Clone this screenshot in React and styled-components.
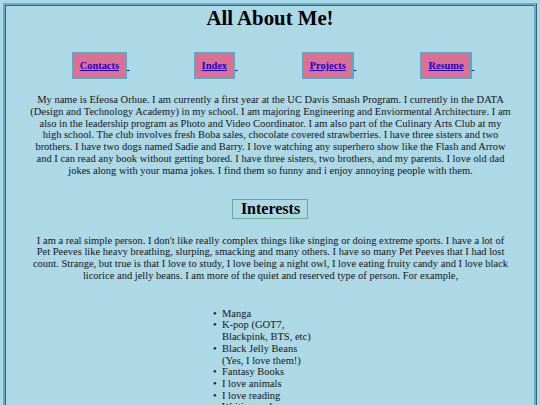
import React from "react";
import styled, { createGlobalStyle } from "styled-components";

const GlobalStyle = createGlobalStyle`
  html {
    background-color: #add8e6;
  }
  body {
    margin: 3px;
    border: 3px ridge #62aec6;
    font-family: "Liberation Serif", "Times New Roman", serif;
    font-size: 10.5px;
    color: #151515;
    background-color: #add8e6;
  }
`;

const Title = styled.h1`
  margin: 0;
  text-align: center;
  font-size: 20.8px;
  line-height: 24px;
  color: #000;
`;

const Nav = styled.nav`
  display: flex;
  justify-content: center;
  gap: 64px;
  margin: 22px 0 0;
  padding-left: 6px;
`;

const NavLink = styled.a`
  color: #1a0dab;
  text-decoration: underline;
  white-space: pre;
`;

const NavBox = styled.span`
  display: inline-block;
  background-color: #db7093;
  border: 2px solid #5aa9c2;
  padding: 5px 6px;
  font-size: 10.4px;
  font-weight: bold;
  line-height: 13px;
  color: #2200cc;
  text-decoration: underline;
`;

const Paragraph = styled.p`
  margin: ${(p) => p.$top || 14}px 23px 0 24px;
  text-align: center;
  line-height: 11.8px;
`;

const Heading = styled.h2`
  display: table;
  margin: 22px auto 0;
  padding: 0 7px 0 8px;
  border: 1px solid #64ad8e;
  font-size: 16px;
  line-height: 18px;
  color: #000;
`;

const List = styled.ul`
  width: 96px;
  margin: 26px auto 0;
  padding: 0;
  line-height: 11.7px;
  list-style: disc outside;
`;

const Item = styled.li`
  margin: 0;

  &::marker {
    content: "•  ";
  }
`;

const links = ["Contacts", "Index", "Projects", "Resume"];

const interests = [
  "Manga",
  "K-pop (GOT7, Blackpink, BTS, etc)",
  "Black Jelly Beans (Yes, I love them!)",
  "Fantasy Books",
  "I love animals",
  "I love reading",
  "Writing code",
  "Watching movies",
];

export default function App() {
  return (
    <>
      <GlobalStyle />
      <Title>All About Me!</Title>
      <Nav>
        {links.map((l) => (
          <NavLink href="#" key={l}>
            <NavBox>{l}</NavBox>{" "}
          </NavLink>
        ))}
      </Nav>
      <Paragraph $top={15}>
        My name is Efeosa Orhue. I am currently a first year at the UC Davis
        Smash Program. I currently in the DATA (Design and Technology Academy)
        in my school. I am majoring Engineering and Enviormental Architecture. I
        am also in the leadership program as Photo and Video Coordinator. I am
        also part of the Culinary Arts Club at my high school. The club involves
        fresh Boba sales, chocolate covered strawberries. I have three sisters
        and two brothers. I have two dogs named Sadie and Barry. I love watching
        any superhero show like the Flash and Arrow and I can read any book
        without getting bored. I have three sisters, two brothers, and my
        parents. I love old dad jokes along with your mama jokes. I find them so
        funny and i enjoy annoying people with them.
      </Paragraph>
      <Heading>Interests</Heading>
      <Paragraph $top={16}>
        I am a real simple person. I don't like really complex things like
        singing or doing extreme sports. I have a lot of Pet Peeves like heavy
        breathing, slurping, smacking and many others. I have so many Pet Peeves
        that I had lost count. Strange, but true is that I love to study, I love
        being a night owl, I love eating fruity candy and I love black licorice
        and jelly beans. I am more of the quiet and reserved type of person. For
        example,
      </Paragraph>
      <List>
        {interests.map((i) => (
          <Item key={i}>{i}</Item>
        ))}
      </List>
    </>
  );
}
